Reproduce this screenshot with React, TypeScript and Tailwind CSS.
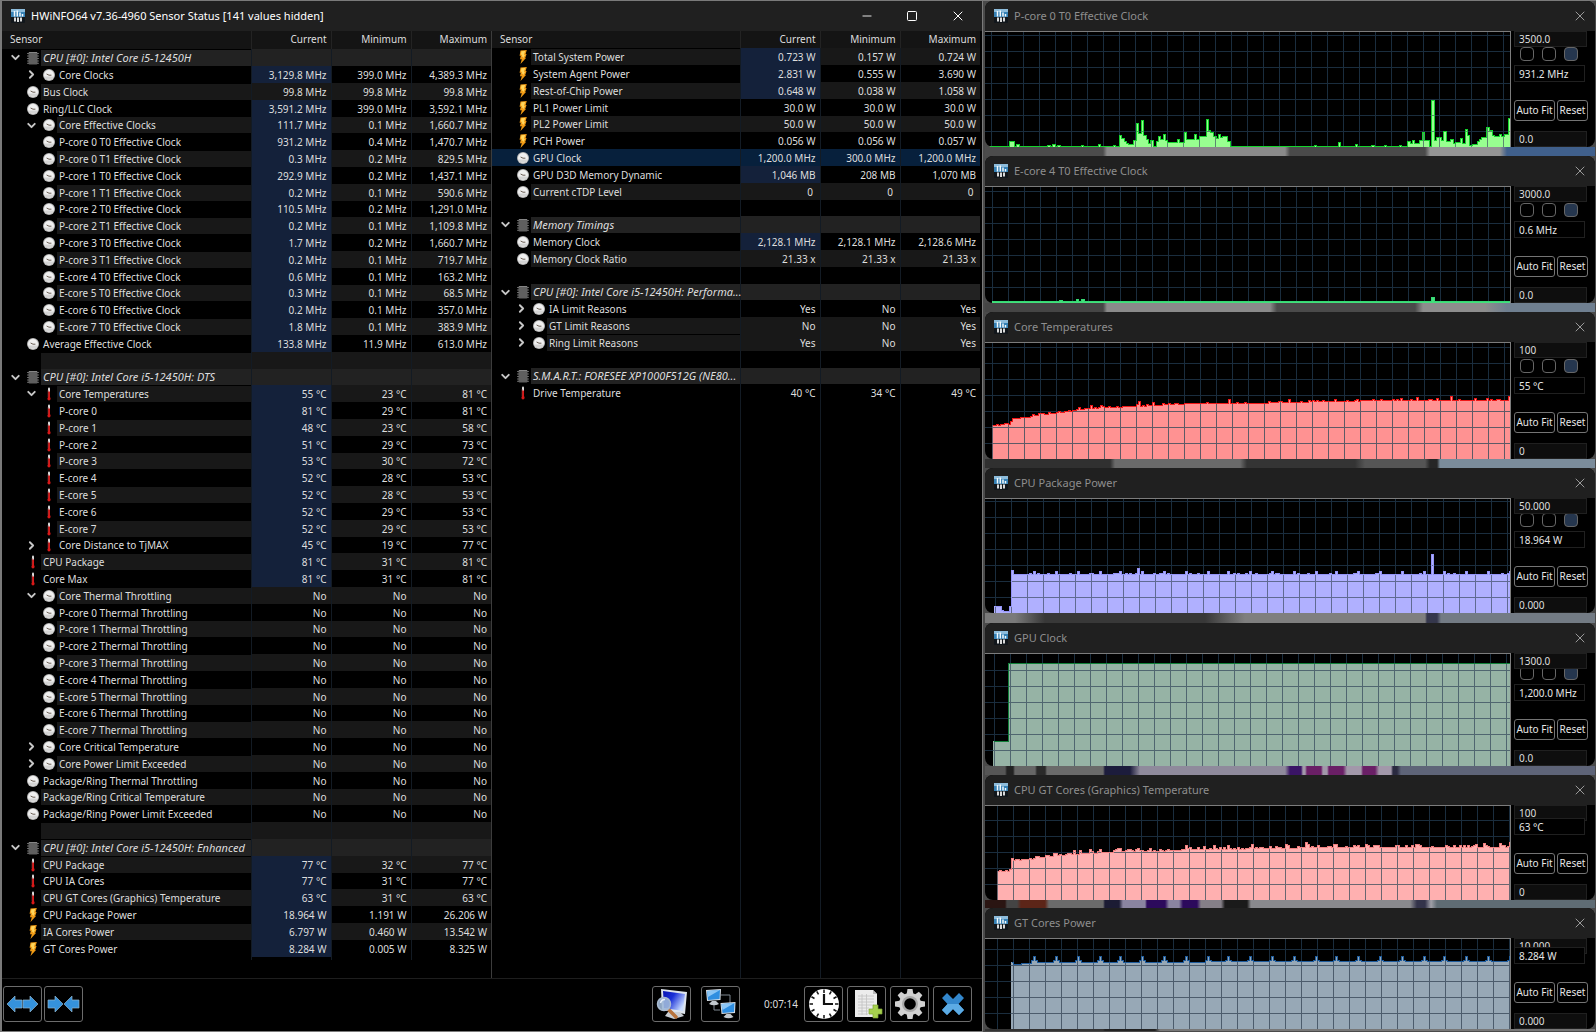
import React from "react";
import { ChevronDown, ChevronRight, Minus, Square, X } from "lucide-react";

type Kind = "clock" | "temp" | "power" | "chip" | "none";
type Row = {
  name: string;
  kind: Kind;
  level?: 0 | 1;
  open?: boolean;
  values?: [string, string, string];
  hot?: boolean;
  selected?: boolean;
  shade?: boolean;
};

const group = (name: string): Row => ({ name, kind: "chip", open: true });
const blank: Row = { name: "", kind: "none" };
const row = (
  name: string,
  kind: Kind,
  level: 0 | 1,
  current: string,
  min: string,
  max: string,
  extra: Partial<Row> = {},
): Row => ({ name, kind, level, values: [current, min, max], ...extra });
const hot = { hot: true };

const leftRows: Row[] = [
  group("CPU [#0]: Intel Core i5-12450H"),
  row("Core Clocks", "clock", 1, "3,129.8 MHz", "399.0 MHz", "4,389.3 MHz", { hot: true, open: false }),
  row("Bus Clock", "clock", 0, "99.8 MHz", "99.8 MHz", "99.8 MHz"),
  row("Ring/LLC Clock", "clock", 0, "3,591.2 MHz", "399.0 MHz", "3,592.1 MHz", hot),
  row("Core Effective Clocks", "clock", 1, "111.7 MHz", "0.1 MHz", "1,660.7 MHz", { hot: true, open: true }),
  row("P-core 0 T0 Effective Clock", "clock", 1, "931.2 MHz", "0.4 MHz", "1,470.7 MHz", hot),
  row("P-core 0 T1 Effective Clock", "clock", 1, "0.3 MHz", "0.2 MHz", "829.5 MHz", hot),
  row("P-core 1 T0 Effective Clock", "clock", 1, "292.9 MHz", "0.2 MHz", "1,437.1 MHz", hot),
  row("P-core 1 T1 Effective Clock", "clock", 1, "0.2 MHz", "0.1 MHz", "590.6 MHz", hot),
  row("P-core 2 T0 Effective Clock", "clock", 1, "110.5 MHz", "0.2 MHz", "1,291.0 MHz", hot),
  row("P-core 2 T1 Effective Clock", "clock", 1, "0.2 MHz", "0.1 MHz", "1,109.8 MHz", hot),
  row("P-core 3 T0 Effective Clock", "clock", 1, "1.7 MHz", "0.2 MHz", "1,660.7 MHz", hot),
  row("P-core 3 T1 Effective Clock", "clock", 1, "0.2 MHz", "0.1 MHz", "719.7 MHz", hot),
  row("E-core 4 T0 Effective Clock", "clock", 1, "0.6 MHz", "0.1 MHz", "163.2 MHz", hot),
  row("E-core 5 T0 Effective Clock", "clock", 1, "0.3 MHz", "0.1 MHz", "68.5 MHz", hot),
  row("E-core 6 T0 Effective Clock", "clock", 1, "0.2 MHz", "0.1 MHz", "357.0 MHz", hot),
  row("E-core 7 T0 Effective Clock", "clock", 1, "1.8 MHz", "0.1 MHz", "383.9 MHz", hot),
  row("Average Effective Clock", "clock", 0, "133.8 MHz", "11.9 MHz", "613.0 MHz", hot),
  blank,
  group("CPU [#0]: Intel Core i5-12450H: DTS"),
  row("Core Temperatures", "temp", 1, "55 °C", "23 °C", "81 °C", { hot: true, open: true }),
  row("P-core 0", "temp", 1, "81 °C", "29 °C", "81 °C", hot),
  row("P-core 1", "temp", 1, "48 °C", "23 °C", "58 °C", hot),
  row("P-core 2", "temp", 1, "51 °C", "29 °C", "73 °C", hot),
  row("P-core 3", "temp", 1, "53 °C", "30 °C", "72 °C", hot),
  row("E-core 4", "temp", 1, "52 °C", "28 °C", "53 °C", hot),
  row("E-core 5", "temp", 1, "52 °C", "28 °C", "53 °C", hot),
  row("E-core 6", "temp", 1, "52 °C", "29 °C", "53 °C", hot),
  row("E-core 7", "temp", 1, "52 °C", "29 °C", "53 °C", hot),
  row("Core Distance to TjMAX", "temp", 1, "45 °C", "19 °C", "77 °C", { hot: true, open: false }),
  row("CPU Package", "temp", 0, "81 °C", "31 °C", "81 °C", hot),
  row("Core Max", "temp", 0, "81 °C", "31 °C", "81 °C", hot),
  row("Core Thermal Throttling", "clock", 1, "No", "No", "No", { open: true }),
  row("P-core 0 Thermal Throttling", "clock", 1, "No", "No", "No"),
  row("P-core 1 Thermal Throttling", "clock", 1, "No", "No", "No"),
  row("P-core 2 Thermal Throttling", "clock", 1, "No", "No", "No"),
  row("P-core 3 Thermal Throttling", "clock", 1, "No", "No", "No"),
  row("E-core 4 Thermal Throttling", "clock", 1, "No", "No", "No"),
  row("E-core 5 Thermal Throttling", "clock", 1, "No", "No", "No"),
  row("E-core 6 Thermal Throttling", "clock", 1, "No", "No", "No"),
  row("E-core 7 Thermal Throttling", "clock", 1, "No", "No", "No"),
  row("Core Critical Temperature", "clock", 1, "No", "No", "No", { open: false }),
  row("Core Power Limit Exceeded", "clock", 1, "No", "No", "No", { open: false }),
  row("Package/Ring Thermal Throttling", "clock", 0, "No", "No", "No"),
  row("Package/Ring Critical Temperature", "clock", 0, "No", "No", "No"),
  row("Package/Ring Power Limit Exceeded", "clock", 0, "No", "No", "No"),
  blank,
  group("CPU [#0]: Intel Core i5-12450H: Enhanced"),
  row("CPU Package", "temp", 0, "77 °C", "32 °C", "77 °C", hot),
  row("CPU IA Cores", "temp", 0, "77 °C", "31 °C", "77 °C", hot),
  row("CPU GT Cores (Graphics) Temperature", "temp", 0, "63 °C", "31 °C", "63 °C", hot),
  row("CPU Package Power", "power", 0, "18.964 W", "1.191 W", "26.206 W", hot),
  row("IA Cores Power", "power", 0, "6.797 W", "0.460 W", "13.542 W", hot),
  row("GT Cores Power", "power", 0, "8.284 W", "0.005 W", "8.325 W", hot),
];

const rightRows: Row[] = [
  row("Total System Power", "power", 0, "0.723 W", "0.157 W", "0.724 W", hot),
  row("System Agent Power", "power", 0, "2.831 W", "0.555 W", "3.690 W", hot),
  row("Rest-of-Chip Power", "power", 0, "0.648 W", "0.038 W", "1.058 W", hot),
  row("PL1 Power Limit", "power", 0, "30.0 W", "30.0 W", "30.0 W"),
  row("PL2 Power Limit", "power", 0, "50.0 W", "50.0 W", "50.0 W"),
  row("PCH Power", "power", 0, "0.056 W", "0.056 W", "0.057 W"),
  row("GPU Clock", "clock", 0, "1,200.0 MHz", "300.0 MHz", "1,200.0 MHz", { selected: true }),
  row("GPU D3D Memory Dynamic", "clock", 0, "1,046 MB", "208 MB", "1,070 MB", hot),
  row("Current cTDP Level", "clock", 0, "0 ", "0 ", "0 "),
  blank,
  group("Memory Timings"),
  row("Memory Clock", "clock", 0, "2,128.1 MHz", "2,128.1 MHz", "2,128.6 MHz", hot),
  row("Memory Clock Ratio", "clock", 0, "21.33 x", "21.33 x", "21.33 x"),
  blank,
  group("CPU [#0]: Intel Core i5-12450H: Performa..."),
  row("IA Limit Reasons", "clock", 1, "Yes", "No", "Yes", { open: false }),
  row("GT Limit Reasons", "clock", 1, "No", "No", "Yes", { open: false }),
  row("Ring Limit Reasons", "clock", 1, "Yes", "No", "Yes", { open: false, shade: true }),
  { name: "", kind: "none", shade: false },
  group("S.M.A.R.T.: FORESEE XP1000F512G (NE80..."),
  row("Drive Temperature", "temp", 0, "40 °C", "34 °C", "49 °C", { shade: false }),
];

function SensorIcon({ kind }: { kind: Kind }) {
  if (kind === "clock")
    return (
      <svg width="14" height="14" viewBox="0 0 14 14" aria-hidden="true">
        <circle cx="7" cy="7" r="6" fill="#b9b9b9" />
        <circle cx="7" cy="7" r="5" fill="#f0f0f0" />
        <path d="M2.600 8.500 A4.600 4.600 0 0 0 11.400 8.500 Z" fill="#d4d4d4" />
        <path d="M4.600 6 L7 7.200 L9.400 7.200" stroke="#6b5f55" strokeWidth="1" fill="none" />
      </svg>
    );
  if (kind === "temp")
    return (
      <svg width="14" height="14" viewBox="0 0 14 14" aria-hidden="true">
        <path d="M6 1.500 a1 1 0 0 1 2 0 V6 H6 Z" fill="#dcdcdc" />
        <path d="M6 4.500 H8 V10 L8.600 11.500 Q8.600 13.500 7 13.500 Q5.400 13.500 5.400 11.500 L6 10 Z" fill="#d81818" />
        <path d="M6 3 V10" stroke="#7c3a3a" strokeWidth=".6" />
      </svg>
    );
  if (kind === "power")
    return (
      <svg width="14" height="14" viewBox="0 0 14 14" aria-hidden="true">
        <path d="M4.500 .5 L10.800 0 L9.600 4 H10.600 L9.200 8 H10 L4.500 14 L5.800 9.200 H4 L4.800 5.800 H3.600 Z" fill="#f09a14" />
        <path d="M5.400 1.200 L9.200 1 L7.900 4.800 L9 5.100 L6.800 9 L7.200 6.800 H5.600 L6.300 4.800 H4.900 Z" fill="#ffd75e" />
      </svg>
    );
  if (kind === "chip")
    return (
      <svg width="14" height="14" viewBox="0 0 14 14" aria-hidden="true">
        <path d="M1.200 2.500H12.800M1.200 5H12.800M1.200 7.500H12.800M1.200 10H12.800M1.200 12.300H12.800" stroke="#7c7c7c" strokeWidth="1" />
        <rect x="2.500" y="1" width="9" height="12.500" rx="1" fill="#5f5f5f" />
        <path d="M3 1.500H11" stroke="#858585" strokeWidth="1" />
      </svg>
    );
  return null;
}

const headings = ["Current", "Minimum", "Maximum"];

function SensorTable({ rows, label, tall }: { rows: Row[]; label: string; tall?: boolean }) {
  return (
    <table aria-label={label} className="h-full w-full table-fixed border-collapse font-['Noto_Sans',sans-serif] text-[10px] leading-4 text-[#dedede]">
      <colgroup>
        <col />
        <col className="w-20" />
        <col className="w-20" />
        <col className="w-20" />
      </colgroup>
      <thead>
        <tr className={tall ? "h-[18px] bg-[#141414] align-top" : "h-[17px] bg-[#141414] align-top"}>
          <th scope="col" className="p-0 pl-2 text-left font-normal">Sensor</th>
          {headings.map((h) => (
            <th key={h} scope="col" className="border-l border-[#232323] p-0 pr-1 text-right font-normal">{h}</th>
          ))}
        </tr>
      </thead>
      <tbody>
        {rows.map((r, i) => {
          const shaded = r.shade ?? i % 2 === 0;
          const bg = r.selected ? "bg-[#07203c]" : r.kind === "chip" ? "bg-[#222222]" : shaded ? "bg-[#181818]" : "bg-black";
          return (
            <tr key={i} className={r.selected ? "h-[17px] bg-[#07203c] nth-[5n]:h-4" : "h-[17px] nth-[5n]:h-4"}>
              <td className="p-0">
                <div className="flex h-4">
                  <div className={r.level ? "flex w-[55px] shrink-0 justify-end" : "flex w-[39px] shrink-0 justify-end"}>
                    {r.open !== undefined && (
                      <button type="button" aria-expanded={r.open} aria-label={"Toggle " + r.name} className="flex w-5 items-center justify-center text-[#c8c8c8]">
                        {r.open ? <ChevronDown size={13} strokeWidth={3.5} /> : <ChevronRight size={13} strokeWidth={3.5} />}
                      </button>
                    )}
                    <span className="flex w-4 items-center justify-center"><SensorIcon kind={r.kind} /></span>
                  </div>
                  <div className={"min-w-0 flex-1 pl-0.5 whitespace-nowrap " + bg + (r.kind === "chip" ? " text-[11px] italic" : "")}>{r.name}</div>
                </div>
              </td>
              {[0, 1, 2].map((c) => (
                <td
                  key={c}
                  className={"border-l border-[#131b24] p-0 pr-1 text-right whitespace-pre " + (c === 0 && r.hot ? "bg-[#14213a]" : bg)}
                >
                  {r.values ? r.values[c] : ""}
                </td>
              ))}
            </tr>
          );
        })}
        <tr aria-hidden="true">
          <td className="p-0" />
          <td className="border-l border-[#131b24] p-0" />
          <td className="border-l border-[#131b24] p-0" />
          <td className="border-l border-[#131b24] p-0" />
        </tr>
      </tbody>
    </table>
  );
}

function AppIcon() {
  return (
    <svg width="14" height="14" viewBox="0 0 14 14" className="shrink-0" aria-hidden="true">
      <rect width="14" height="14" rx="1" fill="#11161b" />
      <rect x="0" y="0" width="14" height="8" fill="#3580b4" />
      <rect x="0" y="0" width="14" height="3" fill="#8dbcdb" />
      <path d="M3.500 2V7.500M6.300 1.500V7.500M9 3.500V7.500M11.500 5V7.500" stroke="#f2f8fc" strokeWidth="1.500" />
      <path d="M4 8.500V12.500M7 8.500V13M10 8.500V12.500" stroke="#e4e4e4" strokeWidth="1.900" />
    </svg>
  );
}

type Point = [number, number];
type Chart = {
  title: string;
  top: string;
  value: string;
  bottom: string;
  size: string;
  height: number;
  gridX: number;
  fill: string;
  line: string;
  grid: string;
  steps: Point[];
  strip: string;
};

const END = 525;

// Joins a slowly moving level with short peaks, one sample for every other pixel.
function series(levels: Point[], peaks: Point[], ripple: number): Point[] {
  const out: Point[] = [];
  for (let x = levels[0][0]; x < END; x += 2) {
    let k = 0;
    while (k < levels.length - 2 && levels[k + 1][0] <= x) k++;
    const [x0, h0] = levels[k];
    const [x1, h1] = levels[k + 1];
    const n = Math.floor(Math.abs(Math.sin(x * 12.9898)) * 43758) % 12;
    let h = Math.round(h0 + ((h1 - h0) * (x - x0)) / (x1 - x0));
    if (n < 2 * ripple) h += n % 2 === 0 ? 1 : ripple;
    const peak = peaks.find((p) => p[0] === x || p[0] === x + 1);
    if (peak) h = peak[1];
    out.push([x, h + 1]);
  }
  return out;
}

const beat = (first: number, h: number): Point[] =>
  Array.from({ length: 23 }, (_, i) => [first + Math.round((i * 216) / 10), h] as Point);

const pCore: Point[] = [
  [4, 1], [24, 6], [29, 1], [31, 3], [34, 1], [62, 2], [65, 1], [67, 3], [70, 1], [72, 2], [75, 1], [96, 2], [98, 1], [113, 3], [115, 1], [128, 2], [130, 1],
  [134, 12], [136, 9], [139, 6], [141, 4], [143, 3], [148, 7], [151, 24], [153, 14], [156, 27], [158, 12], [161, 8], [163, 4], [165, 7], [168, 1], [171, 6],
  [173, 11], [175, 8], [178, 13], [180, 7], [182, 5], [192, 8], [194, 5], [199, 15], [201, 8], [209, 13], [211, 8], [214, 11], [221, 28], [223, 17], [225, 15],
  [228, 11], [231, 9], [233, 13], [235, 10], [237, 11], [242, 6], [245, 1], [329, 2], [331, 1], [353, 5], [355, 1], [370, 3], [372, 1], [386, 2], [389, 1],
  [399, 2], [401, 1], [414, 2], [416, 1], [422, 6], [425, 4], [427, 7], [429, 4], [434, 7], [437, 15], [439, 7], [444, 1], [446, 47], [449, 7], [451, 10], [456, 7],
  [458, 16], [461, 6], [465, 8], [468, 4], [470, 5], [475, 9], [477, 4], [480, 18], [482, 12], [484, 2], [487, 3], [492, 6], [494, 8], [496, 10], [501, 20],
  [504, 17], [507, 12], [509, 11], [514, 13], [516, 11], [519, 13], [523, 29],
];

const charts: Chart[] = [
  {
    title: "P-core 0 T0 Effective Clock", top: "3500.0", value: "931.2 MHz", bottom: "0.0", size: "h-[116px]", height: 115, gridX: 6,
    fill: "#98ff90", line: "#14d42c", grid: "#5a8a70", steps: pCore,
    strip: "h-[9px] bg-[linear-gradient(90deg,#4c4c4c_0_118px,#8a8a8a_122px_300px,#4a4a4a_305px_440px,#949494_445px_515px,#40608c_522px)]",
  },
  {
    title: "E-core 4 T0 Effective Clock", top: "3000.0", value: "0.6 MHz", bottom: "0.0", size: "h-[117px]", height: 116, gridX: 7,
    fill: "#43e07c", line: "#35d873", grid: "#43e07c",
    steps: [[7, 2], [74, 3], [77, 2], [91, 4], [93, 2], [96, 4], [99, 2], [446, 6], [449, 2]],
    strip: "h-[9px] bg-[linear-gradient(90deg,#454545_0_118px,#8a8a8a_122px_285px,#4a4a4a_292px_430px,#8d8d8d_438px_500px,#6f7f90_522px)]",
  },
  {
    title: "Core Temperatures", top: "100", value: "55 °C", bottom: "0", size: "h-[117px]", height: 116, gridX: 7,
    fill: "#ff9292", line: "#f01818", grid: "#5f5a66",
    steps: series(
      [[7, 33], [23, 34], [27, 40], [43, 41], [48, 43], [66, 45], [89, 48], [105, 50], [121, 51], [152, 52], [184, 54], [211, 55], [270, 55], [294, 56], [350, 57], [404, 58], [526, 58]],
      [[93, 51], [105, 53], [115, 53], [151, 54], [153, 57], [167, 56], [243, 59], [303, 59], [349, 59], [371, 59], [415, 60], [431, 61], [451, 60], [465, 62], [489, 60], [501, 60], [511, 59], [523, 62]],
      1,
    ),
    strip: "h-[9px] bg-[linear-gradient(90deg,#303030_0_125px,#6a6a6a_130px_255px,#343434_262px_370px,#555_380px_440px,#262626_445px_452px,#7b8c9b_455px)]",
  },
  {
    title: "CPU Package Power", top: "50.000", value: "18.964 W", bottom: "0.000", size: "h-[115px]", height: 114, gridX: 10,
    fill: "#b0b0ff", line: "#9494f8", grid: "#606a92",
    steps: [[9, 7], [16, 3], [18, 2], [24, 7], ...series([[26, 38], [526, 38]], [...beat(49, 41), [26, 42], [152, 44], [156, 45], [446, 58]], 1)],
    strip: "h-[10px] bg-[linear-gradient(90deg,#7a7a7a_0_30px,#383838_60px_220px,#7f7f7f_260px_440px,#35374c_442px_452px,#737b84_456px)]",
  },
  {
    title: "GPU Clock", top: "1300.0", value: "1,200.0 MHz", bottom: "0.0", size: "h-[113px]", height: 112, gridX: 9,
    fill: "#96b3a5", line: "#108038", grid: "#506670", steps: [[8, 25], [23, 103]],
    strip: "h-[9px] bg-[linear-gradient(90deg,#565656_0_20px,#222_22px_28px,#666_30px_50px,#2a2a2a_52px_60px,#6a6a6a_62px_118px,#1c1c3c_120px_145px,#8f8a9c_155px_300px,#3a1466_305px_316px,#a298aa_318px_320px,#6a1f66_322px_336px,#a298aa_338px_342px,#6a1f66_344px_358px,#a298aa_362px_376px,#6a1f66_378px_390px,#a298aa_394px_406px,#2a2a40_408px_412px,#5e6478_416px)]",
  },
  {
    title: "CPU GT Cores (Graphics) Temperature", top: "100", value: "63 °C", bottom: "0", size: "h-[95px]", height: 94, gridX: 12,
    fill: "#ffb0b0", line: "#f08080", grid: "#6a6670",
    steps: series(
      [[12, 28], [25, 28], [26, 39], [44, 40], [70, 44], [104, 46], [137, 48], [170, 48], [204, 50], [237, 50], [287, 51], [337, 52], [526, 52]],
      [[26, 41], [88, 49], [94, 49], [104, 50], [114, 50], [132, 51], [134, 51], [152, 51], [164, 51], [200, 54], [218, 53], [228, 54], [242, 54], [266, 55], [300, 55], [302, 54], [320, 57], [322, 55], [348, 55], [350, 55], [380, 55], [390, 54], [412, 54], [430, 55], [432, 55], [446, 53], [460, 54], [478, 54], [490, 55], [498, 56], [500, 54], [514, 56], [524, 57]],
      2,
    ),
    strip: "h-[8px] bg-[linear-gradient(90deg,#2a1512_0_20px,#444_22px_32px,#5c2518_36px_60px,#6b6b6b_64px_118px,#1c1c34_120px_134px,#8a84a0_138px_160px,#2c0a5c_162px_180px,#8a84a0_184px_194px,#2c0a5c_198px_212px,#858088_216px_236px,#1a1a1a_240px_262px,#8a8a8e_266px_425px,#33334a_432px_440px,#a0a0a8_446px,#5f6c74_452px)]",
  },
  {
    title: "GT Cores Power", top: "10.000", value: "8.284 W", bottom: "0.000", size: "h-[91px]", height: 90, gridX: 12,
    fill: "#97a8b6", line: "#1f5c9c", grid: "#4c5c6c",
    steps: series(
      [[26, 64], [44, 65], [50, 66], [400, 67], [526, 67]],
      [[26, 66], ...beat(49, 72), ...beat(47, 68), ...beat(51, 68)],
      0,
    ),
    strip: "h-[2px] bg-[linear-gradient(90deg,#333_0_118px,#222_120px_170px,#777_175px)]",
  },
];

function Plot({ c }: { c: Chart }) {
  const H = c.height;
  let outline = "";
  c.steps.forEach(([x, h], i) => {
    outline += (i === 0 ? "M" : "L") + x + " " + (H - h) + " ";
    const next = i + 1 < c.steps.length ? c.steps[i + 1][0] : END;
    outline += "L" + next + " " + (H - h) + " ";
  });
  const xs: number[] = [];
  for (let x = c.gridX; x < END; x += 16) xs.push(x);
  const ys: number[] = [];
  for (let y = H - 16; y > 0; y -= 16) ys.push(y);
  const grid = xs.map((x) => "M" + x + " 0V" + H).join("") + ys.map((y) => "M0 " + y + "H" + END).join("");
  const id = "fill-" + c.title.replace(/[^A-Za-z0-9]/g, "");
  const area = outline + "L" + END + " " + H + " L" + c.steps[0][0] + " " + H + " Z";
  return (
    <svg viewBox={"0 0 " + END + " " + H} preserveAspectRatio="none" className="block h-full w-full" role="img" aria-label={c.title + " history"}>
      <clipPath id={id}><path d={area} /></clipPath>
      <g shapeRendering="crispEdges" fill="none">
        <path d={grid} stroke="#1a2d3e" />
        <path d={area} fill={c.fill} />
        <path d={grid} stroke={c.grid} clipPath={"url(#" + id + ")"} />
        <path d={outline} stroke={c.line} transform="translate(0.5 0.5)" />
      </g>
    </svg>
  );
}

const field = "block h-4 w-[73px] shrink-0 border border-[#202020] bg-[#0e0e0e] px-1 text-[10px] text-[#dedede]";
const small = "h-[21px] rounded-[3px] border border-[#747474] bg-black text-[10px] text-[#e6e6e6]";

function ChartWindow({ c }: { c: Chart }) {
  return (
    <section aria-label={c.title} className="overflow-hidden rounded-lg bg-black font-['Noto_Sans',sans-serif]">
      <header className="flex h-[30px] items-center bg-[#202020] pr-[7px] pl-[9px]">
        <AppIcon />
        <h2 className="flex-1 pl-1.5 text-[11px] text-[#8e8e8e]">{c.title}</h2>
        <button type="button" aria-label={"Close " + c.title} className="text-[#9a9a9a]"><X size={16} strokeWidth={1.5} /></button>
      </header>
      <div className={"flex " + c.size}>
        <div className="min-w-0 flex-1 border-t border-r border-[#7c7c7c]"><Plot c={c} /></div>
        <div className="relative flex w-[84px] shrink-0 flex-col justify-end overflow-hidden pl-[3px]">
          <input aria-label="Upper bound" defaultValue={c.top} className={"absolute top-0 left-[3px] z-10 " + field} />
          <div className="flex shrink-0 gap-2 pl-1.5">
            {["first", "second", "third"].map((n) => (
              <input key={n} type="checkbox" aria-label={"Option " + n} defaultChecked={n === "third"} className="size-[14px] appearance-none rounded-[4px] border border-[#666666] bg-black checked:bg-[#25364e]" />
            ))}
          </div>
          <input aria-label="Current value" readOnly value={c.value} className="relative z-20 mt-1 block h-[17px] w-[71px] shrink-0 border border-[#202020] bg-black px-1 text-[10px] text-[#e6e6e6]" />
          <div className="mt-[18px] flex shrink-0 gap-0.5">
            <button type="button" className={"w-[41px] " + small}>Auto Fit</button>
            <button type="button" className={"w-[31px] " + small}>Reset</button>
          </div>
          <input aria-label="Lower bound" defaultValue={c.bottom} className={"mt-[10px] " + field} />
        </div>
      </div>
    </section>
  );
}

const tool = "flex h-9 w-[39px] items-center justify-center rounded-[3px] border border-[#6c6c6c] bg-black";

function ArrowPair({ inward }: { inward?: boolean }) {
  return (
    <svg width="33" height="20" viewBox="0 0 33 20" fill="#3592dc" stroke="#8fb4cf" strokeWidth=".7" aria-hidden="true">
      {inward ? (
        <>
          <path d="M1 6H8V2L16 10L8 18V14H1Z" />
          <path d="M32 6H25V2L17 10L25 18V14H32Z" />
        </>
      ) : (
        <>
          <path d="M16 6H9V2L1 10L9 18V14H16Z" />
          <path d="M17 6H24V2L32 10L24 18V14H17Z" />
        </>
      )}
    </svg>
  );
}

function MonitorSearch() {
  return (
    <svg width="32" height="32" viewBox="0 0 32 32" aria-hidden="true">
      <defs>
        <linearGradient id="screen" x1="0" y1="0" x2="1" y2=".6"><stop offset="0" stopColor="#0814b0" /><stop offset=".45" stopColor="#1a30d8" /><stop offset="1" stopColor="#c8dcff" /></linearGradient>
      </defs>
      <path d="M5 1L31 4L29 26L6 22Z" fill="#dde4ec" />
      <path d="M7 3L29 6L27 23L8 20Z" fill="url(#screen)" />
      <path d="M12 24H24L28 28L18 31L9 28Z" fill="#c9ced4" />
      <path d="M13 22L20 29" stroke="#b8733c" strokeWidth="3.500" strokeLinecap="round" />
      <circle cx="8" cy="16" r="6.500" fill="#9fb8d8" fillOpacity=".9" stroke="#a9bbd0" strokeWidth="1.500" />
      <path d="M4.500 15A4.500 4.500 0 0 1 9 11.500" stroke="#e8f0fa" strokeWidth="1.500" fill="none" />
    </svg>
  );
}

function Monitors() {
  const one = (
    <>
      <path d="M0 1L15 0L14.500 11L1 12Z" fill="#d6dde4" />
      <path d="M1 2L14 1L13.500 10L2 11Z" fill="#2f8ee0" />
      <path d="M1 2L14 1L2 8Z" fill="#8cc6f5" />
      <path d="M6 12H10L13 15Q8 17.500 3 15Z" fill="#c3c9cf" />
    </>
  );
  return (
    <svg width="32" height="32" viewBox="0 0 32 32" aria-hidden="true">
      <path d="M16 7H25V15M9 17V22H15" stroke="#7f8790" strokeWidth="1" fill="none" />
      <g transform="translate(1 1)">{one}</g>
      <g transform="translate(15.500 14)">{one}</g>
    </svg>
  );
}

function ClockFace() {
  return (
    <svg width="32" height="32" viewBox="0 0 32 32" aria-hidden="true">
      <circle cx="16" cy="16" r="15" fill="#ffffff" />
      {[0, 30, 60, 90, 120, 150, 180, 210, 240, 270, 300, 330].map((a) => (
        <path key={a} d="M16 1.500V5" stroke="#111" strokeWidth="1.500" transform={"rotate(" + a + " 16 16)"} />
      ))}
      <path d="M16 6V16H25" stroke="#111" strokeWidth="2.200" fill="none" />
    </svg>
  );
}

function SheetAdd() {
  return (
    <svg width="32" height="32" viewBox="0 0 32 32" aria-hidden="true">
      <path d="M4 2H22L26 6V29H4Z" fill="#ececec" />
      <path d="M22 2V6H26Z" fill="#b8b8b8" />
      <path d="M7 8H23M7 11H23M7 14H23M7 17H23M7 20H18M7 23H17M7 26H17M11 6V27M15.500 6V27" stroke="#c2c2c2" strokeWidth=".8" />
      <path d="M22 17H27V21H31V26H27V30H22V26H18V21H22Z" fill="#a6d04e" stroke="#7fa834" strokeWidth=".7" />
    </svg>
  );
}

function Gear() {
  return (
    <svg width="32" height="32" viewBox="0 0 32 32" aria-hidden="true">
      <g fill="#d2d2d2">
        {[0, 45, 90, 135, 180, 225, 270, 315].map((a) => (
          <path key={a} d="M12.500 7L13.500 1H18.500L19.500 7Z" transform={"rotate(" + a + " 16 16)"} />
        ))}
        <circle cx="16" cy="16" r="11" />
      </g>
      <circle cx="16" cy="16" r="8" fill="#a9a9a9" />
      <circle cx="16" cy="16" r="5.800" fill="#000" />
    </svg>
  );
}

function BlueCross() {
  return (
    <svg width="26" height="26" viewBox="0 0 26 26" aria-hidden="true">
      <path d="M2 7L7 2L13 8L19 2L24 7L18.500 13L24 19L19 24L13 18L7 24L2 19L7.500 13Z" fill="#3387cc" />
      <path d="M7.500 13L18.500 13L24 19L19 24L13 18L7 24L2 19Z" fill="#5cabe4" />
    </svg>
  );
}

export default function App() {
  return (
    <div className="grid min-h-screen grid-cols-[983fr_613fr] bg-[#4a4a4a]">
      <main className="flex flex-col border-y border-r border-l-2 border-[#7a7a7a] bg-black">
        <header className="flex h-[30px] items-center bg-[#202020] pl-[9px] font-['Noto_Sans',sans-serif]">
          <AppIcon />
          <h1 className="flex-1 pl-1.5 text-[11px] text-white">HWiNFO64 v7.36-4960 Sensor Status [141 values hidden]</h1>
          <button type="button" aria-label="Minimize" className="flex w-[45px] justify-center text-white"><Minus size={14} strokeWidth={1.5} /></button>
          <button type="button" aria-label="Maximize" className="flex w-[45px] justify-center text-white"><Square size={12} strokeWidth={2} /></button>
          <button type="button" aria-label="Close" className="flex w-12 justify-center text-white"><X size={16} strokeWidth={1.5} /></button>
        </header>
        <div className="grid flex-1 grid-cols-2">
          <div className="border-r border-[#3c3c3c] pb-[18px]"><SensorTable rows={leftRows} label="CPU sensors" tall /></div>
          <div className="pr-0.5"><SensorTable rows={rightRows} label="Power, memory and drive sensors" /></div>
        </div>
        <footer className="flex h-[53px] items-start border-t border-[#1e1e1e] pt-[7px] pl-px">
          <div className="flex flex-1 gap-0.5">
            <button type="button" aria-label="Expand columns" className={tool}><ArrowPair /></button>
            <button type="button" aria-label="Shrink columns" className={tool}><ArrowPair inward /></button>
          </div>
          <button type="button" aria-label="Show system summary" className={tool}><MonitorSearch /></button>
          <button type="button" aria-label="Remote monitoring" className={"ml-[10px] " + tool}><Monitors /></button>
          <div className="flex items-center gap-1 pr-2.5">
            <time className="w-[60px] pr-0.5 text-right font-['Noto_Sans',sans-serif] text-[10px] text-[#dedede]">0:07:14</time>
            <button type="button" aria-label="Reset clock" className={tool}><ClockFace /></button>
            <button type="button" aria-label="Start logging" className={tool}><SheetAdd /></button>
            <button type="button" aria-label="Settings" className={tool}><Gear /></button>
            <button type="button" aria-label="Exit" className={tool}><BlueCross /></button>
          </div>
        </footer>
      </main>
      <aside aria-label="Sensor graphs" className="flex flex-col border-t border-[#7a7a7a] pr-px pl-0.5">
        {charts.map((c) => (
          <React.Fragment key={c.title}>
            <ChartWindow c={c} />
            <div className={c.strip} />
          </React.Fragment>
        ))}
      </aside>
    </div>
  );
}
